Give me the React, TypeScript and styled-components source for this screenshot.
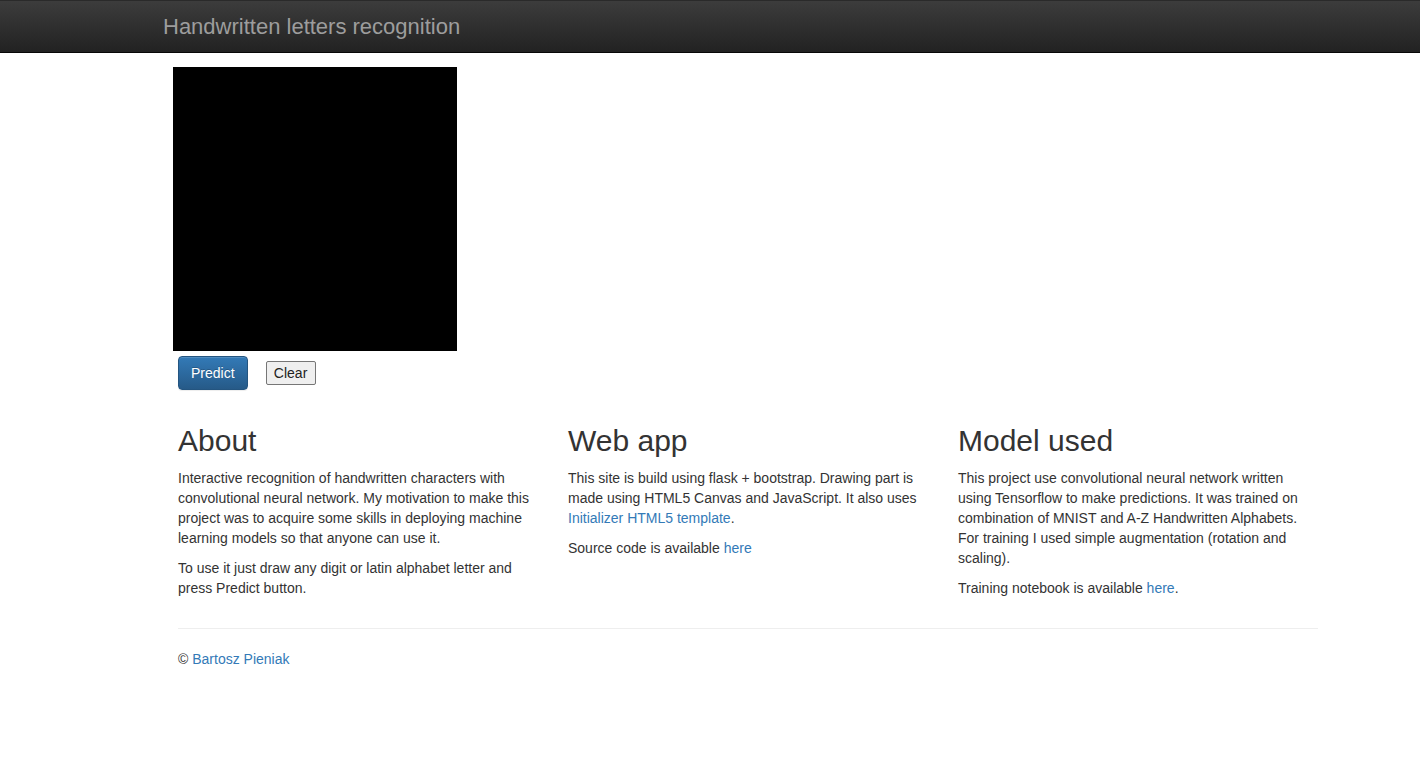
import { createGlobalStyle, styled } from 'styled-components';

const GlobalStyle = createGlobalStyle`
  html, body {
    margin: 0;
    padding: 0;
    background: #fff;
  }

  body {
    font-family: "Liberation Sans", Arial, Helvetica, sans-serif;
    font-size: 14px;
    line-height: 20px;
    color: #333;
  }

  * {
    box-sizing: border-box;
  }
`;

const App = () => {
  const columns = [
    {
      title: 'About',
      paragraphs: [
        <>
          Interactive recognition of handwritten characters with convolutional neural
          network. My motivation to make this project was to acquire some skills in
          deploying machine learning models so that anyone can use it.
        </>,
        <>To use it just draw any digit or latin alphabet letter and press Predict button.</>,
      ],
    },
    {
      title: 'Web app',
      paragraphs: [
        <>
          This site is build using flask + bootstrap. Drawing part is made using HTML5
          Canvas and JavaScript. It also uses <Link href="#">Initializer HTML5 template</Link>.
        </>,
        <>
          Source code is available <Link href="#">here</Link>
        </>,
      ],
    },
    {
      title: 'Model used',
      paragraphs: [
        <>
          This project use convolutional neural network written using Tensorflow to make
          predictions. It was trained on combination of MNIST and A-Z Handwritten
          Alphabets. For training I used simple augmentation (rotation and scaling).
        </>,
        <>
          Training notebook is available <Link href="#">here</Link>.
        </>,
      ],
    },
  ];

  return (
    <>
      <GlobalStyle />
      <Navbar>
        <NavInner>
          <Brand href="#">Handwritten letters recognition</Brand>
        </NavInner>
      </Navbar>
      <Container>
        <Board />
        <Actions>
          <PrimaryButton type="button">Predict</PrimaryButton>
          <PlainButton type="button">Clear</PlainButton>
        </Actions>
        <Row>
          {columns.map((col) => (
            <Column key={col.title}>
              <Heading>{col.title}</Heading>
              {col.paragraphs.map((p, i) => (
                <Text key={i}>{p}</Text>
              ))}
            </Column>
          ))}
        </Row>
        <Divider />
        <Footer>
          <Text>
            © <Link href="#">Bartosz Pieniak</Link>
          </Text>
        </Footer>
      </Container>
    </>
  );
};

export default App;

const Navbar = styled.nav`
  height: 53px;
  background: linear-gradient(to bottom, #3c3c3c 0, #222 100%);
  border-top: 1px solid #2a2a2a;
  border-bottom: 1px solid #080808;
`;

const NavInner = styled.div`
  display: flex;
  align-items: center;
  height: 100%;
  padding: 1px 0 0 163px;
`;

const Brand = styled.a`
  font-size: 22px;
  line-height: 24px;
  color: #9d9d9d;
  text-decoration: none;
`;

const Container = styled.div`
  width: 1170px;
  margin-left: 163px;
  padding: 14px 15px 0;
`;

const Board = styled.div`
  width: 284px;
  height: 284px;
  margin-left: -5px;
  background: #000;
`;

const Actions = styled.div`
  display: flex;
  align-items: center;
  gap: 18px;
  margin-top: 5px;
`;

const PrimaryButton = styled.button`
  height: 34px;
  padding: 6px 12px;
  font-family: inherit;
  font-size: 14px;
  line-height: 20px;
  color: #fff;
  background: linear-gradient(to bottom, #337ab7 0, #265a88 100%);
  border: 1px solid #245580;
  border-radius: 4px;
  box-shadow: inset 0 1px 0 rgba(255, 255, 255, 0.15), 0 1px 1px rgba(0, 0, 0, 0.075);
  text-shadow: 0 -1px 0 rgba(0, 0, 0, 0.2);
  cursor: pointer;
`;

const PlainButton = styled.button`
  width: 50px;
  height: 24px;
  padding: 1px 0;
  font-family: inherit;
  font-size: 14px;
  line-height: 18px;
  color: #222;
  background: #efefef;
  border: 1px solid #767676;
  border-radius: 2px;
  cursor: pointer;
`;

const Row = styled.div`
  display: grid;
  grid-template-columns: repeat(3, 1fr);
  margin: 14px -15px 0;
`;

const Column = styled.div`
  padding: 0 15px;
`;

const Heading = styled.h2`
  margin: 20px 0 11px;
  font-size: 30px;
  font-weight: 500;
  line-height: 33px;
  color: #333;
`;

const Text = styled.p`
  margin: 0 0 10px;
`;

const Link = styled.a`
  color: #337ab7;
  text-decoration: none;
`;

const Divider = styled.hr`
  margin: 20px 0;
  border: 0;
  border-top: 1px solid #eee;
`;

const Footer = styled.footer`
  padding-bottom: 20px;
`;
